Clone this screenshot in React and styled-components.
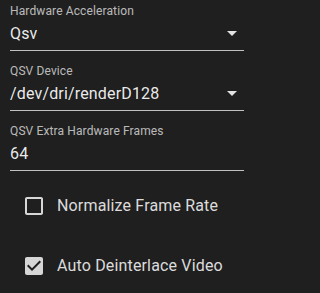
import React from "react";
import styled, { createGlobalStyle } from "styled-components";

const Global = createGlobalStyle`
  html, body { margin: 0; padding: 0; background: #1f1f1f; }
  body { font-family: Roboto, "Noto Sans", Arial, sans-serif; -webkit-font-smoothing: antialiased; }
`;

const Page = styled.div`
  width: 262px;
  height: 293px;
  background: #1f1f1f;
  box-sizing: border-box;
  padding: 3px 18px 0 10px;
  display: flex;
  flex-direction: column;
  overflow: hidden;
`;

const Field = styled.div`
  display: flex;
  flex-direction: column;
  height: 48px;
  margin-bottom: 12px;
`;

const Label = styled.div`
  font-size: 12px;
  line-height: 16px;
  height: 16px;
  color: rgba(255, 255, 255, 0.7);
  letter-spacing: 0.01em;
  white-space: nowrap;
`;

const InputRow = styled.div`
  display: flex;
  align-items: center;
  box-sizing: border-box;
  height: 32px;
  padding: 3px 0 6px;
  border-bottom: 1px solid rgba(255, 255, 255, 0.72);
`;

const Value = styled.div`
  flex: 1;
  font-size: 16px;
  line-height: 23px;
  color: rgba(255, 255, 255, 0.92);
  letter-spacing: 0.01em;
  white-space: nowrap;
`;

const Arrow = styled.svg`
  width: 24px;
  height: 24px;
  flex: none;
  fill: rgba(255, 255, 255, 0.87);
`;

const Checks = styled.div`
  display: flex;
  flex-direction: column;
  gap: 18px;
  margin-top: 2px;
  margin-left: 3px;
`;

const CheckRow = styled.label`
  display: flex;
  align-items: center;
  height: 42px;
`;

const Box = styled.span`
  width: 42px;
  height: 42px;
  box-sizing: border-box;
  padding: 9px;
  display: flex;
  flex: none;
`;

const BoxIcon = styled.svg`
  width: 24px;
  height: 24px;
  fill: rgba(255, 255, 255, 0.82);
`;

const CheckText = styled.span`
  font-size: 16px;
  line-height: 24px;
  color: rgba(255, 255, 255, 0.85);
  letter-spacing: 0.01em;
  margin-left: 2px;
  white-space: nowrap;
`;

const SelectField = ({ label, value }) => (
  <Field>
    <Label>{label}</Label>
    <InputRow>
      <Value>{value}</Value>
      <Arrow viewBox="0 0 24 24">
        <path d="M7 10l5 5 5-5z" />
      </Arrow>
    </InputRow>
  </Field>
);

const TextField = ({ label, value }) => (
  <Field>
    <Label>{label}</Label>
    <InputRow>
      <Value>{value}</Value>
    </InputRow>
  </Field>
);

const Check = ({ checked, children }) => (
  <CheckRow>
    <Box>
      <BoxIcon viewBox="0 0 24 24">
        {checked ? (
          <path d="M19 3H5c-1.11 0-2 .9-2 2v14c0 1.1.89 2 2 2h14c1.11 0 2-.9 2-2V5c0-1.1-.89-2-2-2zm-9 14l-5-5 1.41-1.41L10 14.17l7.59-7.59L19 8l-9 9z" />
        ) : (
          <path d="M19 5v14H5V5h14m0-2H5c-1.1 0-2 .9-2 2v14c0 1.1.9 2 2 2h14c1.1 0 2-.9 2-2V5c0-1.1-.9-2-2-2z" />
        )}
      </BoxIcon>
    </Box>
    <CheckText>{children}</CheckText>
  </CheckRow>
);

export default function App() {
  return (
    <>
      <Global />
      <Page>
        <SelectField label="Hardware Acceleration" value="Qsv" />
        <SelectField label="QSV Device" value="/dev/dri/renderD128" />
        <TextField label="QSV Extra Hardware Frames" value="64" />
        <Checks>
          <Check>Normalize Frame Rate</Check>
          <Check checked>Auto Deinterlace Video</Check>
        </Checks>
      </Page>
    </>
  );
}
